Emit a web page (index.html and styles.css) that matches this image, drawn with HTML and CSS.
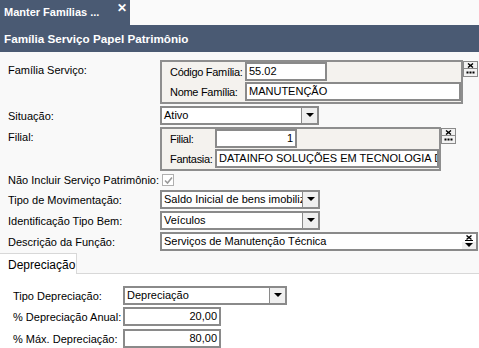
FILE: index.html
```html
<!DOCTYPE html>
<html lang="pt">
<head>
  <meta charset="UTF-8" />
  <title>Manter Famílias</title>
  <link rel="stylesheet" href="styles.css">
</head>
<body>
  <!-- Document tab -->
  <div class="tabbar">
    <div class="doc-tab">Manter Famílias ...<span class="close">&#10005;</span></div>
  </div>
  <!-- Title -->
  <div class="title-bar">Família Serviço Papel Patrimônio</div>
  <!-- Form -->
  <div class="form">
    <div class="row">
      <div class="lbl lbl-group">Família Serviço:</div>
      <div class="group g-familia">
        <div class="grow"><span class="glbl">Código Família:</span><span class="input w-cod">55.02</span></div>
        <div class="grow"><span class="glbl">Nome Família:</span><span class="input w-nome">MANUTENÇÃO</span></div>
      </div>
      <div class="mini-btns">
        <span class="mini"><svg width="7" height="5" viewBox="0 0 7 5"><path d="M1 0.5 L6 4.5 M6 0.5 L1 4.5" stroke="#000" stroke-width="1.4"/></svg></span>
        <span class="mini"><svg width="9" height="3" viewBox="0 0 9 3"><path d="M0.5 1.5h2M3.5 1.5h2M6.5 1.5h2" stroke="#000" stroke-width="2"/></svg></span>
      </div>
    </div>
    <div class="row">
      <div class="lbl">Situação:</div>
      <div class="select w-sit"><span class="val">Ativo</span><span class="arrow"></span></div>
    </div>
    <div class="row">
      <div class="lbl lbl-group">Filial:</div>
      <div class="group g-filial">
        <div class="grow"><span class="glbl short">Filial:</span><span class="input w-fil num">1</span></div>
        <div class="grow"><span class="glbl short">Fantasia:</span><span class="input w-fant">DATAINFO SOLUÇÕES EM TECNOLOGIA DA II</span></div>
      </div>
      <div class="mini-btns">
        <span class="mini"><svg width="7" height="5" viewBox="0 0 7 5"><path d="M1 0.5 L6 4.5 M6 0.5 L1 4.5" stroke="#000" stroke-width="1.4"/></svg></span>
        <span class="mini"><svg width="9" height="3" viewBox="0 0 9 3"><path d="M0.5 1.5h2M3.5 1.5h2M6.5 1.5h2" stroke="#000" stroke-width="2"/></svg></span>
      </div>
    </div>
    <div class="row row-check">
      <div class="lbl">Não Incluir Serviço Patrimônio:</div>
      <span class="check">
        <svg width="9" height="9" viewBox="0 0 9 9"><path d="M1 4.5 L3.5 7 L8 1.5" fill="none" stroke="#9a9a9a" stroke-width="1.6"/></svg>
      </span>
    </div>
    <div class="row">
      <div class="lbl">Tipo de Movimentação:</div>
      <div class="select w-mov"><span class="val">Saldo Inicial de bens imobilizados</span><span class="arrow"></span></div>
    </div>
    <div class="row">
      <div class="lbl">Identificação Tipo Bem:</div>
      <div class="select w-mov"><span class="val">Veículos</span><span class="arrow"></span></div>
    </div>
    <div class="row">
      <div class="lbl">Descrição da Função:</div>
      <div class="input w-desc">Serviços de Manutenção Técnica<span class="side-btns"><span class="sb"><svg width="8" height="6" viewBox="0 0 8 6"><path d="M1.5 0.5 L6.5 4.5 M6.5 0.5 L1.5 4.5" stroke="#000" stroke-width="1.4"/><path d="M0 5.5h8" stroke="#000" stroke-width="1"/></svg></span><span class="sb sb-arrow"></span></span></div>
    </div>
  </div>
  <!-- Tabs -->
  <div class="tabs">
    <div class="tab active">Depreciação</div>
  </div>
  <div class="tab-body">
    <div class="row">
      <div class="lbl lbl-dep">Tipo Depreciação:</div>
      <div class="select w-tipo"><span class="val">Depreciação</span><span class="arrow"></span></div>
    </div>
    <div class="row">
      <div class="lbl lbl-dep">% Depreciação Anual:</div>
      <div class="input w-pct num">20,00</div>
    </div>
    <div class="row">
      <div class="lbl lbl-dep">% Máx. Depreciação:</div>
      <div class="input w-pct num">80,00</div>
    </div>
  </div>
</body>
</html>
```

FILE: styles.css
```css
/* Reset */
* { margin: 0; padding: 0; box-sizing: border-box; }
body {
  width: 479px;
  height: 348px;
  overflow: hidden;
  background: #f9f9f9;
  font-family: "Liberation Sans", Arial, sans-serif;
  font-size: 11px;
  color: #000;
}
/* Document tab bar */
.tabbar {
  height: 25px;
  background: #fafafa;
}
.doc-tab {
  width: 130px;
  height: 25px;
  background: #4a5a73;
  color: #fff;
  font-weight: bold;
  font-size: 11px;
  padding: 6px 0 0 4px;
  position: relative;
}
.close {
  position: absolute;
  left: 117px;
  top: 1px;
  font-size: 12px;
}
/* Title */
.title-bar {
  height: 27px;
  background: #4a5a73;
  color: #fff;
  font-weight: bold;
  font-size: 11.7px;
  padding: 7px 0 0 4px;
}
/* Form rows */
.form { padding: 8px 0 0 8px; }
.row {
  display: flex;
  align-items: center;
  margin-bottom: 2px;
  white-space: nowrap;
}
.lbl {
  width: 152px;
  flex-shrink: 0;
}
.lbl-group { align-self: flex-start; padding-top: 4px; }
/* Group box */
.group {
  border: 2px solid #8e8e8e;
  background: #f4f2ee;
  padding: 0 0 1px 8px;
  display: flex;
  flex-direction: column;
  gap: 1px;
  flex-shrink: 0;
}
.g-familia { width: 303px; }
.g-filial { width: 281px; }
.grow { display: flex; align-items: center; }
.glbl { width: 75px; flex-shrink: 0; letter-spacing: -0.3px; }
.glbl.short { width: 45px; }
/* Inputs */
.input {
  height: 19px;
  background: #fff;
  border: 2px solid #8a8a8a;
  padding: 0 2px;
  line-height: 15px;
  white-space: nowrap;
  overflow: hidden;
  position: relative;
  flex-shrink: 0;
}
.num { text-align: right; }
.w-cod { width: 82px; }
.w-nome { width: 216px; }
.w-fil { width: 82px; }
.w-fant { width: 224px; }
.w-desc { width: 318px; }
.w-pct { width: 98px; }
/* Selects */
.select {
  height: 19px;
  background: #fff;
  border: 2px solid #8a8a8a;
  display: flex;
  line-height: 15px;
  flex-shrink: 0;
}
.select .val {
  flex: 1;
  padding: 0 2px;
  white-space: nowrap;
  overflow: hidden;
}
.arrow {
  width: 16px;
  border-left: 1px solid #8a8a8a;
  background: #efefef;
  position: relative;
  flex-shrink: 0;
}
.arrow::after {
  content: "";
  position: absolute;
  left: 4px;
  top: 5px;
  border-left: 4px solid transparent;
  border-right: 4px solid transparent;
  border-top: 4px solid #000;
}
.w-sit { width: 159px; }
.w-mov { width: 160px; }
.w-tipo { width: 164px; }
/* Mini buttons beside lookups */
.mini-btns {
  align-self: flex-start;
  display: flex;
  flex-direction: column;
  margin-top: 1px;
}
.mini {
  width: 15px;
  height: 8px;
  border: 1px solid #8a8a8a;
  background: #f2f2f2;
  display: flex;
  align-items: center;
  justify-content: center;
}
.mini + .mini { margin-top: -1px; height: 9px; }
.side-btns {
  position: absolute;
  right: 0;
  top: 0;
  width: 14px;
  height: 15px;
  display: flex;
  flex-direction: column;
  background: #fff;
}
.sb {
  height: 8px;
  display: flex;
  align-items: center;
  justify-content: center;
}
.sb-arrow { position: relative; height: 7px; background: #efefef; }
.sb-arrow::after {
  content: "";
  position: absolute;
  left: 3px;
  top: 1px;
  border-left: 4px solid transparent;
  border-right: 4px solid transparent;
  border-top: 4px solid #000;
}
/* Checkbox */
.row-check { margin: 3px 0 4px; }
.check {
  width: 12px;
  height: 12px;
  border: 1px solid #b0b0b0;
  background: #fff;
  display: flex;
  align-items: center;
  justify-content: center;
  margin-left: 2px;
}
/* Tabs */
.tabs {
  margin-top: 2px;
  height: 21px;
  display: flex;
  border-bottom: 1px solid #d8d8d8;
}
.tab {
  width: 77px;
  background: #fff;
  border: 1px solid #d8d8d8;
  border-bottom: none;
  border-left: none;
  padding: 4px 0 0 8px;
  margin-bottom: -1px;
  font-size: 12px;
}
.tab-body {
  background: #fff;
  height: 80px;
  padding: 12px 0 0 13px;
}
.tab-body .row { margin-bottom: 3px; }
.tab-body .row:first-child { margin-bottom: 2px; }
.lbl-dep { width: 110px; }
```
